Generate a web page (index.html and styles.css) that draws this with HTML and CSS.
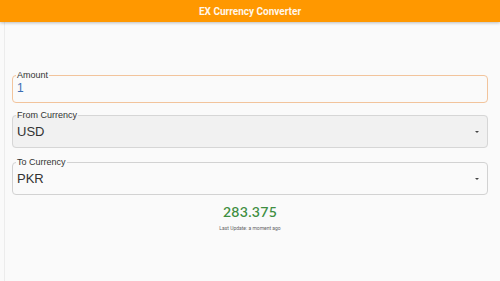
FILE: index.html
```html
<!DOCTYPE html>
<html lang="en">
<head>
    <meta charset="UTF-8">
    <meta name="viewport" content="width=device-width, initial-scale=1.0">
    <title>EX Currency Converter</title>
    <link rel="stylesheet" href="styles.css">
</head>
<body>
    <header class="app-bar">
        <h1>EX Currency Converter</h1>
    </header>

    <main class="content">
        <fieldset class="field field-amount">
            <legend>Amount</legend>
            <span class="field-value amount-value">1</span>
        </fieldset>

        <fieldset class="field field-select filled">
            <legend>From Currency</legend>
            <span class="field-value">USD</span>
            <span class="caret"></span>
        </fieldset>

        <fieldset class="field field-select">
            <legend>To Currency</legend>
            <span class="field-value">PKR</span>
            <span class="caret"></span>
        </fieldset>

        <div class="result">283.375</div>
        <div class="last-update">Last Update: a moment ago</div>
    </main>
</body>
</html>
```

FILE: styles.css
```css
* {
    margin: 0;
    padding: 0;
    box-sizing: border-box;
}

body {
    background: #fafafa;
    font-family: "Liberation Sans", Arial, sans-serif;
    width: 500px;
    height: 281px;
    overflow: hidden;
}

.app-bar {
    height: 22px;
    background: #ff9800;
    display: flex;
    align-items: center;
    justify-content: center;
    box-shadow: 0 1px 3px rgba(0, 0, 0, 0.25);
    position: relative;
}

.app-bar h1 {
    font-family: Roboto, sans-serif;
    font-size: 10px;
    font-weight: 700;
    color: #fff6ea;
}

.content {
    height: 259px;
    margin-left: 4px;
    border-left: 1px solid #ececec;
    padding: 48px 12px 0 7px;
}

.field {
    position: relative;
    border: 1px solid #d2d2d2;
    border-radius: 4px;
    padding: 0 5px 0 4px;
    display: flex;
    align-items: center;
    background: #fafafa;
}

.field legend {
    font-size: 9px;
    color: #333;
    padding: 0 1px;
    margin-left: -1px;
    line-height: 10px;
}

.field-amount {
    height: 33px;
    border-color: #f2c49c;
}

.field-select {
    height: 38px;
    margin-top: 7px;
}

.field-select.filled {
    background: #f1f1f1;
    border-color: #d6d6d6;
}

.field-select + .field-select {
    margin-top: 9px;
}

.field-value {
    font-size: 13px;
    color: #333;
    margin-top: -4px;
}

.amount-value {
    color: #3a6db3;
    font-size: 12px;
    margin-top: -6px;
}

.caret {
    margin-left: auto;
    margin-right: 3px;
    margin-top: -4px;
    width: 0;
    height: 0;
    border-left: 2px solid transparent;
    border-right: 2px solid transparent;
    border-top: 2px solid #444;
}

.result {
    margin-top: 8px;
    text-align: center;
    font-family: Lato, sans-serif;
    font-size: 14px;
    font-weight: 600;
    color: #3e8e41;
    letter-spacing: 0.3px;
}

.last-update {
    margin-top: 5px;
    text-align: center;
    font-family: Roboto, sans-serif;
    font-size: 5px;
    color: #666;
}
```
